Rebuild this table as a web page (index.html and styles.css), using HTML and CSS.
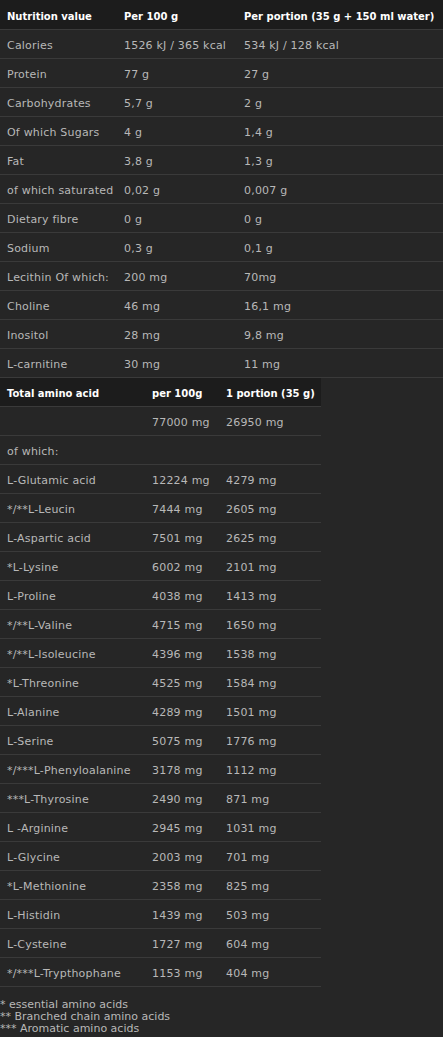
FILE: index.html
```html
<!DOCTYPE html>
<html>
<head>
<meta charset="utf-8">
<link rel="stylesheet" href="styles.css">
</head>
<body>
<table class="nt nt-main">
  <colgroup><col class="c1"><col class="c2"><col></colgroup>
  <thead>
    <tr><th>Nutrition value</th><th>Per 100 g</th><th>Per portion (35 g + 150 ml water)</th></tr>
  </thead>
  <tbody>
    <tr><td>Calories</td><td>1526 kJ / 365 kcal</td><td>534 kJ / 128 kcal</td></tr>
    <tr><td>Protein</td><td>77 g</td><td>27 g</td></tr>
    <tr><td>Carbohydrates</td><td>5,7 g</td><td>2 g</td></tr>
    <tr><td>Of which Sugars</td><td>4 g</td><td>1,4 g</td></tr>
    <tr><td>Fat</td><td>3,8 g</td><td>1,3 g</td></tr>
    <tr><td>of which saturated</td><td>0,02 g</td><td>0,007 g</td></tr>
    <tr><td>Dietary fibre</td><td>0 g</td><td>0 g</td></tr>
    <tr><td>Sodium</td><td>0,3 g</td><td>0,1 g</td></tr>
    <tr><td>Lecithin Of which:</td><td>200 mg</td><td>70mg</td></tr>
    <tr><td>Choline</td><td>46 mg</td><td>16,1 mg</td></tr>
    <tr><td>Inositol</td><td>28 mg</td><td>9,8 mg</td></tr>
    <tr><td>L-carnitine</td><td>30 mg</td><td>11 mg</td></tr>
  </tbody>
</table>
<table class="nt nt-amino">
  <colgroup><col class="a1"><col class="a2"><col></colgroup>
  <thead>
    <tr><th>Total amino acid</th><th>per 100g</th><th>1 portion (35 g)</th></tr>
  </thead>
  <tbody>
    <tr><td></td><td>77000 mg</td><td>26950 mg</td></tr>
    <tr><td>of which:</td><td></td><td></td></tr>
    <tr><td>L-Glutamic acid</td><td>12224 mg</td><td>4279 mg</td></tr>
    <tr><td>*/**L-Leucin</td><td>7444 mg</td><td>2605 mg</td></tr>
    <tr><td>L-Aspartic acid</td><td>7501 mg</td><td>2625 mg</td></tr>
    <tr><td>*L-Lysine</td><td>6002 mg</td><td>2101 mg</td></tr>
    <tr><td>L-Proline</td><td>4038 mg</td><td>1413 mg</td></tr>
    <tr><td>*/**L-Valine</td><td>4715 mg</td><td>1650 mg</td></tr>
    <tr><td>*/**L-Isoleucine</td><td>4396 mg</td><td>1538 mg</td></tr>
    <tr><td>*L-Threonine</td><td>4525 mg</td><td>1584 mg</td></tr>
    <tr><td>L-Alanine</td><td>4289 mg</td><td>1501 mg</td></tr>
    <tr><td>L-Serine</td><td>5075 mg</td><td>1776 mg</td></tr>
    <tr><td>*/***L-Phenyloalanine</td><td>3178 mg</td><td>1112 mg</td></tr>
    <tr><td>***L-Thyrosine</td><td>2490 mg</td><td>871 mg</td></tr>
    <tr><td>L -Arginine</td><td>2945 mg</td><td>1031 mg</td></tr>
    <tr><td>L-Glycine</td><td>2003 mg</td><td>701 mg</td></tr>
    <tr><td>*L-Methionine</td><td>2358 mg</td><td>825 mg</td></tr>
    <tr><td>L-Histidin</td><td>1439 mg</td><td>503 mg</td></tr>
    <tr><td>L-Cysteine</td><td>1727 mg</td><td>604 mg</td></tr>
    <tr><td>*/***L-Trypthophane</td><td>1153 mg</td><td>404 mg</td></tr>
  </tbody>
</table>
<div class="notes">
  <div>* essential amino acids</div>
  <div>** Branched chain amino acids</div>
  <div>*** Aromatic amino acids</div>
</div>
</body>
</html>
```
FILE: styles.css
```css
html, body {
  margin: 0;
  padding: 0;
  background: #262626;
}
body {
  font-family: "DejaVu Sans", Verdana, sans-serif;
  font-size: 11px;
  color: #b8b8b8;
}
.nt {
  border-collapse: collapse;
  table-layout: fixed;
}
.nt-main {
  width: 443px;
}
.nt-amino {
  width: 321px;
}
.c1 { width: 117px; }
.c2 { width: 120px; }
.a1 { width: 145px; }
.a2 { width: 74px; }
.nt th,
.nt td {
  height: 26px;
  padding: 2px 0 0 7px;
  text-align: left;
  vertical-align: middle;
  white-space: nowrap;
  border-bottom: 1px solid #3a3a3a;
}
.nt th {
  background: #1c1c1c;
  color: #ffffff;
  font-weight: bold;
  font-size: 10px;
}
.nt-main th {
  height: 26px;
  padding-top: 3px;
}
.nt td {
  font-weight: normal;
  letter-spacing: 0.2px;
}
.notes {
  margin-top: 12px;
  line-height: 12px;
}
```
